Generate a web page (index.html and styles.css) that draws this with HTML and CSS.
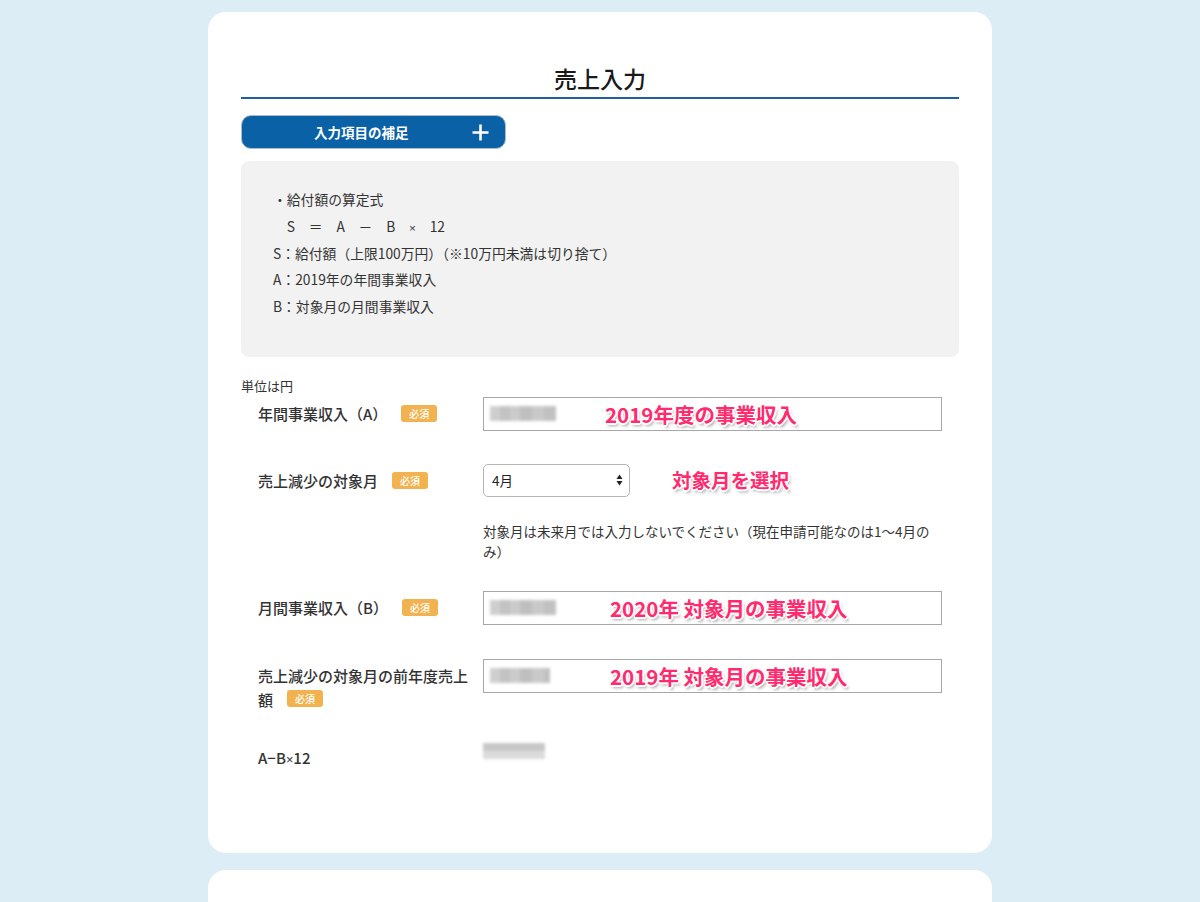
FILE: index.html
```html
<!DOCTYPE html>
<html lang="ja">
<head>
<meta charset="utf-8">
<title>売上入力</title>
<link rel="stylesheet" href="styles.css">
</head>
<body>
<div class="page">
  <section class="card">
    <h1 class="title">売上入力</h1>
    <div class="toggle">
      <span class="toggle-text">入力項目の補足</span>
      <svg class="plus" width="17" height="17" viewBox="0 0 17 17"><path d="M8.5 0.5v16M0.5 8.5h16" stroke="#fff" stroke-width="2.6" fill="none"/></svg>
    </div>
    <div class="note">
      <p>・給付額の算定式</p>
      <p>　S　＝　A　－　B　<span class="times">×</span>　12</p>
      <p>S：給付額（上限100万円）（※10万円未満は切り捨て）</p>
      <p>A：2019年の年間事業収入</p>
      <p>B：対象月の月間事業収入</p>
    </div>

    <p class="unit">単位は円</p>

    <div class="row row-1">
      <div class="label">年間事業収入（A）<span class="badge">必須</span></div>
      <div class="field">
        <span class="blur-wrap w1"><span class="blur"></span></span>
        <span class="memo">2019年度の事業収入</span>
      </div>
    </div>

    <div class="row row-2">
      <div class="label">売上減少の対象月<span class="badge">必須</span></div>
      <div class="select">
        <span>4月</span>
        <svg class="arrows" width="7" height="12" viewBox="0 0 7 12"><path d="M3.5 0.5L6.5 5H0.5z M3.5 11.5L6.5 7H0.5z" fill="#222"/></svg>
      </div>
      <span class="memo memo-sel">対象月を選択</span>
    </div>

    <p class="help">対象月は未来月では入力しないでください（現在申請可能なのは1〜4月のみ）</p>

    <div class="row row-3">
      <div class="label">月間事業収入（B）<span class="badge">必須</span></div>
      <div class="field">
        <span class="blur-wrap w2"><span class="blur"></span></span>
        <span class="memo">2020年 対象月の事業収入</span>
      </div>
    </div>

    <div class="row row-4">
      <div class="label">売上減少の対象月の前年度売上額<span class="badge">必須</span></div>
      <div class="field">
        <span class="blur-wrap w2"><span class="blur short"></span></span>
        <span class="memo">2019年 対象月の事業収入</span>
      </div>
    </div>

    <div class="row row-5">
      <div class="label">A−B<span class="times">×</span>12</div>
      <div class="result"><span class="blur result-blur"></span></div>
    </div>
  </section>
  <section class="card card-next"></section>
</div>
</body>
</html>
```
FILE: styles.css
```css
html, body {
  margin: 0;
  padding: 0;
}
body {
  background: #dcedf5;
  font-family: "Noto Sans CJK JP", "Noto Sans", sans-serif;
  color: #333;
}
.page {
  width: 784px;
  margin: 0 auto;
  padding-top: 12px;
  height: 890px;
  overflow: hidden;
}
.card {
  background: #fff;
  border-radius: 18px;
  padding: 51px 33px 83px;
}
.card-next {
  margin-top: 17px;
  height: 60px;
  padding: 0;
}
.title {
  margin: 0;
  font-size: 23px;
  line-height: 30px;
  font-weight: 500;
  color: #1a1a1a;
  text-align: center;
  padding-bottom: 4px;
  border-bottom: 2px solid #1f5f9f;
}
.toggle {
  margin-top: 16px;
  width: 265px;
  height: 34px;
  box-sizing: border-box;
  background: #0a61a6;
  border: 1px solid #a9bccd;
  border-radius: 10px;
  display: flex;
  align-items: center;
  padding: 0 16px 0 72px;
}
.toggle-text {
  color: #fff;
  font-size: 13.5px;
  font-weight: 700;
}
.plus {
  margin-left: auto;
}
.note {
  margin-top: 12px;
  background: #f2f2f2;
  border-radius: 8px;
  padding: 25px 32px 37px;
  font-size: 13.8px;
  line-height: 26.75px;
  color: #333;
}
.note p {
  margin: 0;
  height: 26.75px;
}
.times {
  font-family: "Liberation Sans", sans-serif;
  font-size: 0.85em;
  line-height: 0;
}
.unit {
  margin: 19px 0 0;
  font-size: 13px;
  line-height: 20px;
  color: #333;
}
.row {
  display: flex;
  align-items: flex-start;
}
.label {
  width: 215px;
  padding-left: 17px;
  margin-right: 10px;
  padding-top: 5px;
  font-size: 15px;
  line-height: 24px;
  font-weight: 500;
  color: #333;
  flex-shrink: 0;
}
.badge {
  display: inline-block;
  margin-left: 14px;
  width: 36px;
  height: 17px;
  line-height: 17px;
  border-radius: 3px;
  background: #f2b24f;
  color: #fff;
  font-size: 10px;
  text-align: center;
  vertical-align: middle;
  position: relative;
  top: -2px;
}
.row-4 .badge {
  top: -3px;
}
.row-1 { margin-top: 1px; }
.row-2 { margin-top: 33px; }
.row-3 { margin-top: 30px; }
.row-4 { margin-top: 34px; }
.row-5 { margin-top: 27px; }
.field {
  width: 459px;
  height: 34px;
  box-sizing: border-box;
  border: 1px solid #a8a8a8;
  display: flex;
  align-items: center;
  padding-left: 6px;
}
.blur-wrap {
  display: flex;
  align-items: center;
  flex-shrink: 0;
}
.w1 { width: 115px; }
.w2 { width: 120px; }
.blur {
  display: block;
  width: 66px;
  height: 15px;
  background:
    linear-gradient(90deg, #c9c9c9 0 10px, #bdbdbd 10px 20px, #c6c6c6 20px 30px, #b9b9b9 30px 42px, #c4c4c4 42px 54px, #bbbbbb 54px 66px);
  filter: blur(1.6px);
  opacity: 0.9;
}
.blur.short {
  width: 60px;
}
.memo {
  color: #ff2b6e;
  font-size: 20.5px;
  font-weight: 700;
  line-height: 24px;
  white-space: nowrap;
  text-shadow:
    1px 1px 0 #fff, -1px -1px 0 #fff, 1px -1px 0 #fff, -1px 1px 0 #fff,
    0 2px 0 #fff, 2px 0 0 #fff,
    2px 3px 3px rgba(0, 0, 0, 0.35);
}
.memo-sel {
  font-size: 19.5px;
  margin-left: 42px;
  margin-top: 4px;
}
.select {
  width: 147px;
  height: 33px;
  box-sizing: border-box;
  border: 1px solid #b5b5b5;
  border-radius: 5px;
  display: flex;
  align-items: center;
  padding: 0 6px 0 8px;
  font-size: 13.5px;
  color: #222;
}
.arrows {
  margin-left: auto;
}
.help {
  margin: 24px 0 0 242px;
  width: 459px;
  font-size: 13.5px;
  line-height: 20px;
  color: #333;
}
.row-5 .label {
  padding-top: 7px;
}
.result {
  padding-top: 4px;
}
.result-blur {
  width: 62px;
  height: 16px;
  background: linear-gradient(180deg, #c2c2c2 0 8px, #d8d8d8 8px 16px);
}
```
